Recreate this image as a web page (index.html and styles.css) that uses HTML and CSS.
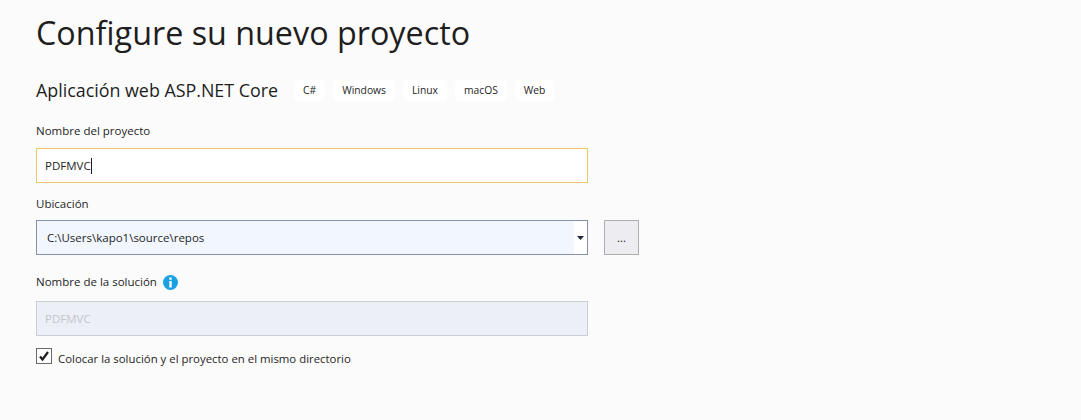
FILE: index.html
```html
<!DOCTYPE html>
<html lang="es">
<head>
<meta charset="utf-8">
<title>Configure su nuevo proyecto</title>
<link rel="stylesheet" href="styles.css">
</head>
<body>
<main class="page">
  <h1 class="title">Configure su nuevo proyecto</h1>
  <div class="template">
    <h2 class="template-name">Aplicación web ASP.NET Core</h2>
    <ul class="tags">
      <li class="tag">C#</li>
      <li class="tag">Windows</li>
      <li class="tag">Linux</li>
      <li class="tag">macOS</li>
      <li class="tag">Web</li>
    </ul>
  </div>
  <div class="label label-name">Nombre del proyecto</div>
  <div class="input input-focus"><span>PDFMVC</span><span class="caret"></span></div>
  <div class="label label-loc">Ubicación</div>
  <div class="loc-row">
    <div class="combo">
      <div class="combo-text">C:\Users\kapo1\source\repos</div>
      <div class="combo-arrow"><svg width="7" height="4" viewBox="0 0 7 4"><path d="M0 0h7L3.500 4z" fill="#1e2a3c"/></svg></div>
    </div>
    <div class="browse">...</div>
  </div>
  <div class="label label-sol">Nombre de la solución
    <svg class="info" width="15" height="15" viewBox="0 0 15 15"><circle cx="7.500" cy="7.500" r="7.500" fill="#1ba1e2"/><rect x="6.300" y="2.500" width="2.400" height="2.300" fill="#fff"/><rect x="6.300" y="6" width="2.400" height="6.500" fill="#fff"/></svg>
  </div>
  <div class="input input-disabled">PDFMVC</div>
  <div class="check-row">
    <span class="checkbox"><svg width="10" height="10" viewBox="0 0 10 10"><path d="M1 5.500l2.500 3L9 1" fill="none" stroke="#1e1e1e" stroke-width="2.200"/></svg></span>
    <span class="check-label">Colocar la solución y el proyecto en el mismo directorio</span>
  </div>
</main>
</body>
</html>
```
FILE: styles.css
```css
* { box-sizing: border-box; }
html, body { margin: 0; padding: 0; }
body {
  width: 1081px;
  height: 420px;
  overflow: hidden;
  background: #fbfbfb;
  color: #1e1e1e;
  font-family: "Open Sans", "Noto Sans", sans-serif;
}
.page { padding: 9px 0 0 36px; }
.title {
  margin: 0;
  font-size: 32.3px;
  line-height: 46px;
  font-weight: 400;
  color: #1e1e1e;
}
.template {
  display: flex;
  align-items: center;
  margin-top: 23px;
  height: 24px;
}
.template-name {
  margin: 0;
  font-size: 17.85px;
  line-height: 24px;
  font-weight: 400;
}
.tags {
  display: flex;
  gap: 8px;
  list-style: none;
  margin: 0 0 0 16px;
  padding: 0;
}
.tag {
  height: 21px;
  padding: 0 9px;
  background: #fff;
  border-radius: 4px;
  font-size: 10.3px;
  line-height: 21px;
}
.label {
  font-size: 11.5px;
  line-height: 18px;
}
.label-name { margin-top: 20px; }
.label-loc { margin-top: 12px; }
.label-sol {
  display: flex;
  align-items: center;
  gap: 6px;
  margin-top: 18px;
}
.input {
  display: flex;
  align-items: center;
  width: 552px;
  height: 35px;
  margin-top: 8px;
  padding: 0 8px;
  font-size: 11.5px;
}
.input-focus { background: #fff; border: 1px solid #eac66a; }
.input-disabled {
  margin-top: 10px;
  background: #eceff6;
  border: 1px solid #ccced6;
  color: #c2c5cd;
}
.caret { width: 1px; height: 16px; background: #1e1e1e; }
.loc-row { display: flex; gap: 16px; margin-top: 7px; }
.combo {
  display: flex;
  width: 552px;
  height: 35px;
  border: 1px solid #8591a8;
  background: #fff;
}
.combo-text {
  flex: 1;
  padding-left: 10px;
  background: #f2f6fe;
  font-size: 11.5px;
  line-height: 33px;
}
.combo-arrow {
  display: flex;
  align-items: center;
  justify-content: center;
  width: 13px;
}
.browse {
  width: 35px;
  height: 35px;
  border: 1px solid #aeaeae;
  background: #ececf1;
  font-size: 11.5px;
  line-height: 33px;
  text-align: center;
}
.check-row {
  display: flex;
  align-items: flex-start;
  gap: 6px;
  margin-top: 12px;
}
.checkbox {
  display: flex;
  align-items: center;
  justify-content: center;
  width: 16px;
  height: 16px;
  border: 1px solid #6b6b6b;
  background: #fff;
}
.check-label { font-size: 11.4px; line-height: 21px; }
```
